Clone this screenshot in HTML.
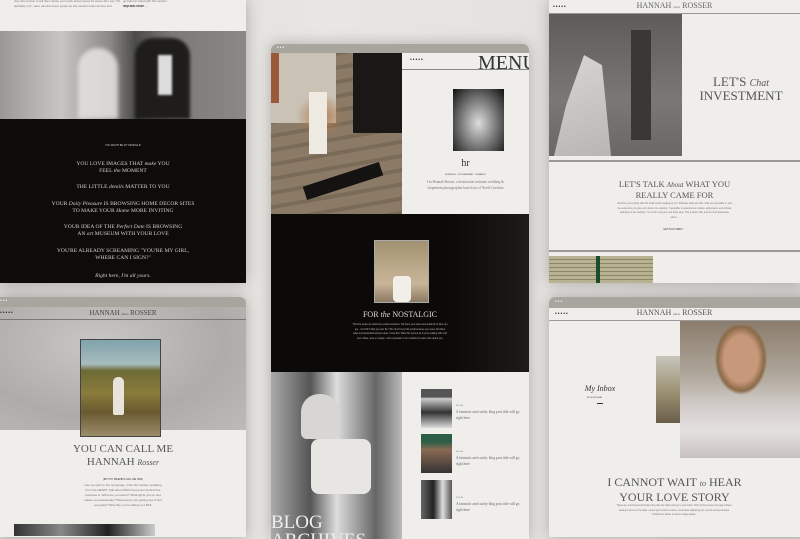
<!DOCTYPE html>
<html><head><meta charset="utf-8"><style>
*{margin:0;padding:0;box-sizing:border-box}
body{width:800px;height:533px;overflow:hidden;background:linear-gradient(90deg,#d9d7d3,#e8e6e2 40%,#e4e2de 70%,#d8d6d2);position:relative;font-family:"Liberation Serif",serif}
.a{position:absolute}
.card{position:absolute;background:#efeeea;overflow:hidden;box-shadow:0 0 14px rgba(0,0,0,.25)}
.bar{position:absolute;left:0;right:0;background:#a8a59f}
.dots{position:absolute;font-size:5px;letter-spacing:1px;color:#222;font-family:"Liberation Sans",sans-serif}
.c{text-align:center;left:0;right:0}
.t{font-family:"Liberation Sans",sans-serif;color:#777;font-size:3px;line-height:5px}
.gl{position:absolute;height:1px;background:#888}
</style></head><body>

<!-- TOP LEFT -->
<div class="card" style="left:0;top:0;width:246px;height:283px">
  <div class="a t" style="left:14px;top:-1px;width:110px">Use this section to tell them about your work and process for those who say "Oh definitely not". Here use the lorem space as this section looks all nice and</div>
  <div class="a t" style="left:123px;top:-1px;width:70px">go hand-in-hand with this section<br><b style="color:#333">INQUIRE NOW →</b></div>
  <div class="a" style="left:0;top:31px;width:246px;height:88px;background:linear-gradient(90deg,#9a9896 0%,#c8c6c3 25%,#8a8886 45%,#4c4b4a 55%,#7c7a78 70%,#8a8986 100%)"></div>
  <div class="a" style="left:78px;top:48px;width:40px;height:71px;background:#e6e4e0;border-radius:20px 20px 0 0;opacity:.85;filter:blur(2px)"></div>
  <div class="a" style="left:135px;top:38px;width:55px;height:81px;background:#1e1d1c;border-radius:18px 18px 0 0;filter:blur(1.5px)"></div>
  <div class="a" style="left:158px;top:55px;width:14px;height:40px;background:#ddd;filter:blur(1px)"></div>
  <div class="a" style="left:0;top:119px;width:246px;height:164px;background:#0e0c0b;color:#d4d0c8;font-size:5.6px;line-height:6.5px">
    <div class="a c" style="top:24px;font-size:2.5px;font-family:'Liberation Sans'">YOU MIGHT BE MY PEOPLE IF</div>
    <div class="a c" style="top:42px">YOU LOVE IMAGES THAT <i>make</i> YOU<br>FEEL <i>the</i> MOMENT</div>
    <div class="a c" style="top:65px">THE LITTLE <i>details</i> MATTER TO YOU</div>
    <div class="a c" style="top:82px">YOUR <i>Daily Pleasure</i> IS BROWSING HOME DECOR SITES<br>TO MAKE YOUR <i>Home</i> MORE INVITING</div>
    <div class="a c" style="top:105px">YOUR IDEA OF THE <i>Perfect Date</i> IS BROWSING<br>AN <i>art</i> MUSEUM WITH YOUR LOVE</div>
    <div class="a c" style="top:129px">YOU'RE ALREADY SCREAMING "YOU'RE MY GIRL,<br>WHERE CAN I SIGN?"</div>
    <div class="a c" style="top:154px;font-style:italic">Right here, I'm all yours.</div>
  </div>
</div>

<!-- BOTTOM LEFT -->
<div class="card" style="left:0;top:297px;width:246px;height:240px;border-radius:0 6px 0 0">
  <div class="bar" style="top:0;height:10px"><span class="dots" style="left:0;top:1px;color:#eee">•••</span></div>
  <div class="a" style="left:0;top:10px;width:246px;height:123px;background:radial-gradient(ellipse at 40% 30%,#c9c7c3,#aeaca8 60%,#bdbbb7)"></div>
  <div class="a" style="left:0;top:10px;width:246px;height:13px;border-bottom:1px solid #777">
    <span class="dots" style="left:0;top:3px">•••••</span>
    <div class="a c" style="top:2px;font-size:7px;color:#444">HANNAH <span style="font-size:3px">photo</span> ROSSER</div>
  </div>
  <div class="a" style="left:80px;top:42px;width:81px;height:98px;border:1px solid #444;background:linear-gradient(180deg,#7fa3ad 0%,#a8bcbc 25%,#6d6a35 32%,#8a7c3c 55%,#6a5a30 75%,#9c8d6a 100%)"></div>
  <div class="a" style="left:113px;top:80px;width:11px;height:38px;background:#e8e4dc;border-radius:5px 5px 2px 2px"></div>
  <div class="a c" style="top:146px;font-size:11px;line-height:13px;color:#555">YOU CAN CALL ME<br>HANNAH <i style="font-size:8px">Rosser</i></div>
  <div class="a c t" style="top:180px;color:#333;font-size:2.5px">(BUT MY FRIENDS CALL ME HAN)</div>
  <div class="a c t" style="top:186px;width:80px;margin:0 auto">Like we said on the homepage, write this section speaking from the HEART. Talk about WHO the person behind the business is. What are you about? What lights you up and makes you passionate? What keeps you getting out of bed everyday? Write like you're talking to a BFF.</div>
  <div class="a" style="left:14px;top:227px;width:141px;height:12px;background:linear-gradient(90deg,#333,#888,#222,#ccc)"></div>
</div>

<!-- CENTER -->
<div class="card" style="left:271px;top:44px;width:258px;height:495px;border-radius:6px 6px 0 0">
  <div class="bar" style="top:0;height:9px"><span class="dots" style="left:6px;top:1px;color:#eee">•••</span></div>
  <div class="a" style="left:0;top:9px;width:131px;height:161px;background:repeating-linear-gradient(170deg,#8a7a66 0 10px,#7a6a58 10px 14px)"></div>
  <div class="a" style="left:0;top:9px;width:65px;height:70px;background:#c9c2b5"></div>
  <div class="a" style="left:0;top:9px;width:8px;height:50px;background:#9a5a3a"></div>
  <div class="a" style="left:82px;top:9px;width:49px;height:80px;background:#1a1816"></div>
  <div class="a" style="left:25px;top:50px;width:50px;height:45px;background:radial-gradient(ellipse,#b07a50,transparent 70%)"></div>
  <div class="a" style="left:38px;top:48px;width:18px;height:62px;background:#eeeae2"></div>
  <div class="a" style="left:32px;top:130px;width:80px;height:14px;background:#151312;transform:rotate(-18deg)"></div>
  <div class="a" style="left:131px;top:9px;width:127px;height:161px;background:#efeeea">
    <div class="dots" style="left:8px;top:4px">•••••</div>
    <div class="a" style="left:76px;top:0;font-size:20px;color:#333;line-height:20px">MENU</div>
    <div class="gl" style="left:0;right:0;top:16px"></div>
    <div class="a" style="left:51px;top:36px;width:51px;height:62px;background:radial-gradient(ellipse at 50% 55%,#ddd,#777 50%,#111)"></div>
    <div class="a c" style="top:105px;font-size:10px;color:#333">hr</div>
    <div class="a c t" style="top:120px;font-size:2px;color:#333">NOSTALGIC · DOCUMENTARY · ROMANTIC</div>
    <div class="a c" style="top:126px;font-size:3.6px;line-height:6px;color:#777;width:80px;margin:0 auto">I'm Hannah Rosser, a destination intimate wedding &amp; elopement photographer based out of North Carolina</div>
  </div>
  <div class="a" style="left:0;top:170px;width:258px;height:158px;background:linear-gradient(90deg,#0c0a09 70%,#1e1c1b)">
    <div class="a" style="left:103px;top:26px;width:55px;height:63px;border:1px solid #aaa;background:linear-gradient(180deg,#a09070,#b8a888 40%,#c9b598 70%,#8a7a62)"></div>
    <div class="a" style="left:122px;top:62px;width:18px;height:26px;background:#f2efe8;border-radius:4px"></div>
    <div class="a c" style="top:96px;font-size:8px;color:#ddd">FOR <i>the</i> NOSTALGIC</div>
    <div class="a c t" style="top:109px;color:#bbb;font-size:2.3px;line-height:4.5px;width:95px;margin:0 auto">This first sentence should be a warm welcome. Tell them your name and a little bit of who you are - not JUST what you sell. Be YOU. Don't bury this proof because you never told them what a professional business does. Know this: Write this section as if you're talking with a bff over coffee, wine or mango - with a question or an invitation to learn more about you.</div>
  </div>
  <div class="a" style="left:0;top:328px;width:131px;height:167px;background:linear-gradient(90deg,#aaa 0%,#555 30%,#ddd 50%,#666 80%,#bbb)"></div>
  <div class="a" style="left:30px;top:350px;width:38px;height:45px;background:#d8d6d2;border-radius:18px 18px 6px 6px"></div>
  <div class="a" style="left:40px;top:395px;width:60px;height:55px;background:#e8e6e3;border-radius:8px"></div>
  <div class="a" style="left:0;top:470px;font-size:19px;line-height:18px;color:#eee">BLOG<br>ARCHIVES</div>
  <div class="a" style="left:131px;top:328px;width:127px;height:167px;background:#efeeea">
    <div class="a" style="left:19px;top:17px;width:31px;height:39px;background:linear-gradient(180deg,#555 20%,#ccc 25%,#333 60%,#ddd)"></div>
    <div class="a" style="left:19px;top:62px;width:31px;height:39px;background:linear-gradient(180deg,#2d5e46 20%,#8a6a54 40%,#333)"></div>
    <div class="a" style="left:19px;top:108px;width:31px;height:39px;background:linear-gradient(90deg,#666,#222 40%,#ddd 70%,#555)"></div>
    <div class="a" style="left:54px;top:30px;width:65px;font-size:3.6px;line-height:6px;color:#666"><span style="font-size:2px">01.01.00</span><br>A fantastic and catchy blog post title will go right here</div>
    <div class="a" style="left:54px;top:76px;width:65px;font-size:3.6px;line-height:6px;color:#666"><span style="font-size:2px">01.01.00</span><br>A fantastic and catchy blog post title will go right here</div>
    <div class="a" style="left:54px;top:122px;width:65px;font-size:3.6px;line-height:6px;color:#666"><span style="font-size:2px">01.01.00</span><br>A fantastic and catchy blog post title will go right here</div>
  </div>
</div>

<!-- TOP RIGHT -->
<div class="card" style="left:549px;top:0;width:251px;height:283px">
  <div class="dots" style="left:4px;top:4px">•••••</div>
  <div class="a c" style="top:1px;font-size:8px;color:#666">HANNAH <span style="font-size:3px">photo</span> ROSSER</div>
  <div class="gl" style="left:0;right:0;top:13px;background:#999"></div>
  <div class="a" style="left:0;top:14px;width:133px;height:142px;background:linear-gradient(180deg,#5e5c5a 0%,#6e6c6a 35%,#7a7876 60%,#6a6866 100%)"></div>
  <div class="a" style="left:5px;top:55px;width:60px;height:101px;background:linear-gradient(160deg,#d8d6d2,#b8b6b2);clip-path:polygon(50% 0,80% 10%,95% 100%,0 100%,20% 50%)"></div>
  <div class="a" style="left:82px;top:30px;width:20px;height:110px;background:#3a3836"></div>
  <div class="a" style="left:133px;top:76px;width:118px;text-align:center;font-size:13px;line-height:12px;color:#555">LET'S <i style="font-size:10px">Chat</i><br>INVESTMENT</div>
  <div class="a" style="left:0;top:160px;width:251px;height:2px;background:#999"></div>
  <div class="a c" style="top:179px;font-size:8.5px;line-height:10px;color:#555">LET'S TALK <i style="font-size:7px">About</i> WHAT YOU<br>REALLY CAME FOR</div>
  <div class="a c t" style="top:202px;width:115px;margin:0 auto;font-size:2.3px;line-height:4.7px">Introduce your pricing with this small section leading up to it. Reiterate what you offer, what you specialize in, and the experience you give your clients. An example: 'I specialize in adventurous couples, elopements, and intimate weddings in the outdoors. I'm not for everyone, and that's okay. This is what I offer and am most passionate about...</div>
  <div class="a c t" style="top:228px;color:#333;font-size:2.3px">GET IN MY INBOX →</div>
  <div class="a" style="left:0;top:250px;width:251px;height:2px;background:#999"></div>
  <div class="a" style="left:0;top:256px;width:104px;height:27px;background:repeating-linear-gradient(180deg,#b8b290 0 3px,#8a866a 3px 4px)"></div>
  <div class="a" style="left:47px;top:256px;width:4px;height:27px;background:#1d4a2c"></div>
</div>

<!-- BOTTOM RIGHT -->
<div class="card" style="left:549px;top:297px;width:256px;height:240px;border-radius:6px 0 0 0">
  <div class="bar" style="top:0;height:11px"><span class="dots" style="left:6px;top:2px;color:#eee">•••</span></div>
  <div class="dots" style="left:6px;top:14px">•••••</div>
  <div class="a c" style="top:11px;font-size:8px;color:#555;padding-right:5px">HANNAH <span style="font-size:3px">photo</span> ROSSER</div>
  <div class="gl" style="left:0;right:0;top:23px;background:#999"></div>
  <div class="a" style="left:107px;top:59px;width:24px;height:67px;background:linear-gradient(180deg,#c8c6bc,#9a9070 55%,#6a5e4a)"></div>
  <div class="a" style="left:131px;top:24px;width:125px;height:137px;background:linear-gradient(180deg,#8a7c6c 0%,#b0a89c 40%,#cfc9c6 60%,#e4e0e0 80%,#c8c2c0)"></div>
  <div class="a" style="left:162px;top:28px;width:60px;height:75px;background:radial-gradient(ellipse at 50% 45%,#c8987a 0 40%,#8a6a48 55%,transparent 62%)"></div>
  <div class="a" style="left:26px;top:87px;width:50px;text-align:center;font-size:8px;color:#333;font-style:italic">My Inbox</div>
  <div class="a t" style="left:38px;top:99px;font-size:2px;color:#333">BOOK WITH ME</div>
  <div class="a" style="left:48px;top:106px;width:6px;height:1px;background:#333"></div>
  <div class="a" style="left:0;top:179px;width:251px;text-align:center;font-size:12px;line-height:12.5px;color:#555">I CANNOT WAIT <i style="font-size:8px">to</i> HEAR<br>YOUR LOVE STORY</div>
  <div class="a t" style="left:65px;top:207px;width:120px;text-align:center;font-size:2.3px;line-height:4.5px">These are your final words before they take the bullet and get in your inbox. Don't let them leave the page without leaving it all out on the table. Lorem ipsum dolor sit amet, consectetur adipiscing elit, sed do eiusmod tempor incididunt ut labore et dolore magna aliqua.</div>
</div>

</body></html>
